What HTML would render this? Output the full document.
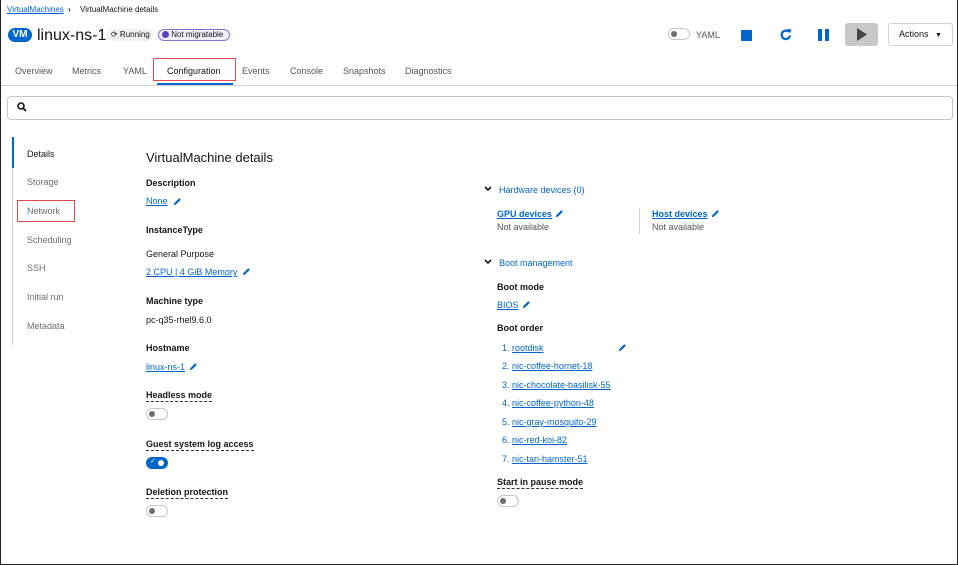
<!DOCTYPE html>
<html><head><meta charset="utf-8"><style>
*{box-sizing:border-box;margin:0;padding:0}
body{width:958px;height:565px;overflow:hidden;background:#fff;font-family:"Liberation Sans",sans-serif;color:#151515;position:relative}
#frame{position:absolute;left:0;top:0;width:958px;height:565px;border:1px solid #222;border-top:0}
.t{position:absolute;white-space:nowrap;line-height:14px;font-size:9px}
.b{font-weight:bold}
.lk{color:#0066cc;text-decoration:underline}
.dl{border-bottom:1px dashed #333;line-height:12px}
.g{color:#555}
.nav{color:#6a6e73;font-size:9px}
.tab{color:#555;font-size:9px}
.pen{position:absolute;width:9px;height:9px}
.tog{position:absolute;width:22px;height:12px;border:1px solid #c6c6c6;border-radius:7px;background:#fff}
.tog::after{content:"";position:absolute;left:2px;top:2px;width:6px;height:6px;border-radius:50%;background:#6a6e73}
.on{background:#0066cc;border-color:#0066cc}
.on::after{left:11px;background:#fff}
</style></head><body>
<div id="frame"></div>
<svg width="0" height="0" style="position:absolute"><defs><symbol id="p" viewBox="0 0 10 10"><path d="M1 9 L1.5 6.8 L7 1.3 L8.7 3 L3.2 8.5 Z" fill="#0066cc"/></symbol></defs></svg>

<div class="t lk" style="left:7px;top:3px;font-size:8px">VirtualMachines</div>
<div class="t b" style="left:68px;top:3px;font-size:8px">›</div>
<div class="t" style="left:80px;top:3px;font-size:8px">VirtualMachine details</div>

<div style="position:absolute;left:8px;top:28px;width:24px;height:14px;border-radius:7px;background:#0066cc;color:#fff;font-size:10px;line-height:14px;text-align:center;font-weight:bold">VM</div>
<div class="t" style="left:37px;top:26px;font-size:16px;line-height:20px">linux-ns-1</div>
<div style="position:absolute;left:107px;top:29px;width:46px;height:12px;border-radius:6px;background:#f0f0f0;font-size:8px;line-height:12px;padding-left:4px">⟳ Running</div>
<div style="position:absolute;left:158px;top:29px;width:72px;height:12px;border-radius:6px;border:1px solid #8476d1;background:#f2f0fc;font-size:8px;line-height:10px;padding-left:3px"><span style="display:inline-block;width:7px;height:7px;border-radius:50%;background:#5e40be;vertical-align:-1px"></span> Not migratable</div>

<div class="tog" style="left:668px;top:28px"></div>
<div class="t g" style="left:696px;top:28px">YAML</div>
<div style="position:absolute;left:741px;top:30px;width:11px;height:11px;background:#0066cc"></div>
<svg style="position:absolute;left:779px;top:28px" width="14" height="14" viewBox="0 0 14 14"><path d="M11 7.5A4.2 4.2 0 1 1 9.5 3.6" fill="none" stroke="#0066cc" stroke-width="2.2"/><path d="M8 1 L12.5 1.5 L11 5.5Z" fill="#0066cc"/></svg>
<div style="position:absolute;left:818px;top:29px;width:4px;height:12px;background:#0066cc"></div>
<div style="position:absolute;left:825px;top:29px;width:4px;height:12px;background:#0066cc"></div>
<div style="position:absolute;left:845px;top:23px;width:33px;height:23px;background:#c8c8c8;border-radius:3px"></div>
<svg style="position:absolute;left:856px;top:28px" width="12" height="13"><path d="M1 0L11 6.5L1 13Z" fill="#444"/></svg>
<div style="position:absolute;left:888px;top:23px;width:65px;height:23px;border:1px solid #d2d2d2;border-radius:3px;font-size:9px;line-height:21px;padding-left:10px">Actions <span style="font-size:7px;margin-left:4px">▼</span></div>

<div class="t tab" style="left:15px;top:64px">Overview</div>
<div class="t tab" style="left:72px;top:64px">Metrics</div>
<div class="t tab" style="left:123px;top:64px">YAML</div>
<div class="t" style="left:167px;top:64px;color:#151515">Configuration</div>
<div class="t tab" style="left:242px;top:64px">Events</div>
<div class="t tab" style="left:290px;top:64px">Console</div>
<div class="t tab" style="left:343px;top:64px">Snapshots</div>
<div class="t tab" style="left:405px;top:64px">Diagnostics</div>
<div style="position:absolute;left:153px;top:58px;width:83px;height:23px;border:1px solid #e0484e"></div>
<div style="position:absolute;left:1px;top:85px;width:956px;height:1px;background:#d2d2d2"></div>
<div style="position:absolute;left:157px;top:83px;width:76px;height:2px;background:#0066cc"></div>

<div style="position:absolute;left:7px;top:96px;width:946px;height:24px;border:1px solid #c6c6c6;border-radius:4px"></div>
<svg style="position:absolute;left:17px;top:102px" width="10" height="10"><circle cx="4" cy="4" r="3" fill="none" stroke="#151515" stroke-width="1.6"/><path d="M6.2 6.2L9 9" stroke="#151515" stroke-width="1.8"/></svg>

<div style="position:absolute;left:12px;top:137px;width:1px;height:208px;background:#d2d2d2"></div>
<div style="position:absolute;left:12px;top:137px;width:2px;height:31px;background:#0066cc"></div>
<div class="t nav" style="left:27px;top:147px;color:#151515">Details</div>
<div class="t nav" style="left:27px;top:175px">Storage</div>
<div class="t nav" style="left:27px;top:204px">Network</div>
<div style="position:absolute;left:17px;top:200px;width:58px;height:22px;border:1px solid #e0484e"></div>
<div class="t nav" style="left:27px;top:233px">Scheduling</div>
<div class="t nav" style="left:27px;top:261px">SSH</div>
<div class="t nav" style="left:27px;top:290px">Initial run</div>
<div class="t nav" style="left:27px;top:319px">Metadata</div>

<div class="t" style="left:146px;top:149px;font-size:13px;line-height:18px">VirtualMachine details</div>
<div class="t b" style="left:146px;top:176px">Description</div>
<div class="t lk" style="left:146px;top:194px">None</div><svg class="pen" style="left:173px;top:197px"><use href="#p"/></svg>
<div class="t b" style="left:146px;top:223px">InstanceType</div>
<div class="t" style="left:146px;top:247px">General Purpose</div>
<div class="t lk" style="left:146px;top:265px">2 CPU | 4 GiB Memory</div><svg class="pen" style="left:242px;top:267px"><use href="#p"/></svg>
<div class="t b" style="left:146px;top:294px">Machine type</div>
<div class="t" style="left:146px;top:313px">pc-q35-rhel9.6.0</div>
<div class="t b" style="left:146px;top:341px">Hostname</div>
<div class="t lk" style="left:146px;top:360px">linux-ns-1</div><svg class="pen" style="left:189px;top:362px"><use href="#p"/></svg>
<div class="t b dl" style="left:146px;top:389px">Headless mode</div>
<div class="tog" style="left:146px;top:408px"></div>
<div class="t b dl" style="left:146px;top:438px">Guest system log access</div>
<div class="tog on" style="left:146px;top:457px"><span style="position:absolute;left:3px;top:-1px;color:#fff;font-size:7px">✓</span></div>
<div class="t b dl" style="left:146px;top:486px">Deletion protection</div>
<div class="tog" style="left:146px;top:505px"></div>

<svg style="position:absolute;left:484px;top:186px" width="8" height="6"><path d="M1 1L4 4L7 1" fill="none" stroke="#151515" stroke-width="1.6"/></svg>
<div class="t" style="left:499px;top:183px;color:#0066cc">Hardware devices (0)</div>
<div class="t lk b" style="left:497px;top:207px">GPU devices</div><svg class="pen" style="left:555px;top:209px"><use href="#p"/></svg>
<div class="t g" style="left:497px;top:220px">Not available</div>
<div style="position:absolute;left:639px;top:208px;width:1px;height:26px;background:#d2d2d2"></div>
<div class="t lk b" style="left:652px;top:207px">Host devices</div><svg class="pen" style="left:711px;top:209px"><use href="#p"/></svg>
<div class="t g" style="left:652px;top:220px">Not available</div>
<svg style="position:absolute;left:484px;top:259px" width="8" height="6"><path d="M1 1L4 4L7 1" fill="none" stroke="#151515" stroke-width="1.6"/></svg>
<div class="t" style="left:499px;top:256px;color:#0066cc">Boot management</div>
<div class="t b" style="left:497px;top:280px">Boot mode</div>
<div class="t lk" style="left:497px;top:298px">BIOS</div><svg class="pen" style="left:522px;top:300px"><use href="#p"/></svg>
<div class="t b" style="left:497px;top:321px">Boot order</div>
<div class="t" style="left:502px;top:341px;color:#0066cc">1. <span class="lk">rootdisk</span></div><svg class="pen" style="left:618px;top:343px"><use href="#p"/></svg>
<div class="t" style="left:502px;top:359px;color:#0066cc">2. <span class="lk">nic-coffee-hornet-18</span></div>
<div class="t" style="left:502px;top:378px;color:#0066cc">3. <span class="lk">nic-chocolate-basilisk-55</span></div>
<div class="t" style="left:502px;top:396px;color:#0066cc">4. <span class="lk">nic-coffee-python-48</span></div>
<div class="t" style="left:502px;top:415px;color:#0066cc">5. <span class="lk">nic-gray-mosquito-29</span></div>
<div class="t" style="left:502px;top:433px;color:#0066cc">6. <span class="lk">nic-red-koi-82</span></div>
<div class="t" style="left:502px;top:452px;color:#0066cc">7. <span class="lk">nic-tan-hamster-51</span></div>
<div class="t b dl" style="left:497px;top:476px">Start in pause mode</div>
<div class="tog" style="left:497px;top:495px"></div>
</body></html>
